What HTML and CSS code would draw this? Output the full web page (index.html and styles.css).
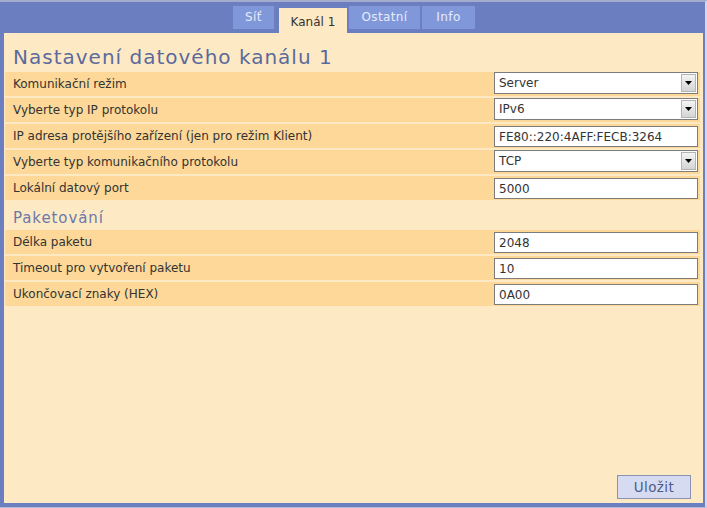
FILE: index.html
```html
<!DOCTYPE html>
<html lang="cs">
<head>
<meta charset="utf-8">
<title>Nastavení datového kanálu 1</title>
<link rel="stylesheet" href="styles.css">
</head>
<body>
<div class="frame">
  <nav class="tabs">
    <a class="tab tab-sit">Síť</a>
    <a class="tab tab-active">Kanál 1</a>
    <a class="tab tab-ostatni">Ostatní</a>
    <a class="tab tab-info">Info</a>
  </nav>
  <main class="panel">
    <h1 class="title">Nastavení datového kanálu 1</h1>
    <div class="rows">
      <div class="row">
        <span class="label">Komunikační režim</span>
        <div class="select"><span class="val">Server</span><span class="btn"><svg width="7" height="4" viewBox="0 0 7 4"><path d="M0 0H7L3.5 4Z" fill="#000"/></svg></span></div>
      </div>
      <div class="row">
        <span class="label">Vyberte typ IP protokolu</span>
        <div class="select"><span class="val">IPv6</span><span class="btn"><svg width="7" height="4" viewBox="0 0 7 4"><path d="M0 0H7L3.5 4Z" fill="#000"/></svg></span></div>
      </div>
      <div class="row">
        <span class="label">IP adresa protějšího zařízení (jen pro režim Klient)</span>
        <input class="text" type="text" value="FE80::220:4AFF:FECB:3264">
      </div>
      <div class="row">
        <span class="label">Vyberte typ komunikačního protokolu</span>
        <div class="select"><span class="val">TCP</span><span class="btn"><svg width="7" height="4" viewBox="0 0 7 4"><path d="M0 0H7L3.5 4Z" fill="#000"/></svg></span></div>
      </div>
      <div class="row">
        <span class="label">Lokální datový port</span>
        <input class="text" type="text" value="5000">
      </div>
    </div>
    <h2 class="section">Paketování</h2>
    <div class="rows">
      <div class="row">
        <span class="label">Délka paketu</span>
        <input class="text" type="text" value="2048">
      </div>
      <div class="row">
        <span class="label">Timeout pro vytvoření paketu</span>
        <input class="text" type="text" value="10">
      </div>
      <div class="row">
        <span class="label">Ukončovací znaky (HEX)</span>
        <input class="text" type="text" value="0A00">
      </div>
    </div>
    <div class="actions">
      <button class="save" type="button">Uložit</button>
    </div>
  </main>
</div>
</body>
</html>
```
FILE: styles.css
```css
* { box-sizing: border-box; }
html, body { margin: 0; padding: 0; }
body {
  width: 707px;
  height: 508px;
  overflow: hidden;
  background: #6b7fc0;
  font-family: "DejaVu Sans", sans-serif;
}
.frame {
  width: 707px;
  height: 508px;
  display: flex;
  flex-direction: column;
  background: #6b7fc0;
  border-top: 2px solid #a4acce;
  border-right: 2px solid #d4d8ea;
  border-bottom: 1px solid #b4bcd8;
  padding: 0 2px 4px 4px;
}
.tabs {
  height: 31px;
  display: flex;
  align-items: flex-start;
  padding-left: 229px;
}
.tab {
  display: block;
  height: 23px;
  margin-top: 4px;
  background: #8098da;
  color: #e6ebfb;
  font-size: 12px;
  line-height: 22px;
  text-align: center;
  letter-spacing: 0.4px;
}
.tab-sit { width: 41px; }
.tab-active {
  width: 68px;
  height: 25px;
  margin-top: 6px;
  margin-left: 5px;
  background: #fee9c5;
  color: #333;
  line-height: 28px;
  letter-spacing: 0;
}
.tab-ostatni { width: 71px; margin-left: 2px; }
.tab-info { width: 53px; margin-left: 2px; }
.panel {
  flex: 1;
  display: flex;
  flex-direction: column;
  background: #fee9c5;
  padding: 12px 3px 4px 1px;
}
.title {
  margin: 0 0 3px 8px;
  font-weight: normal;
  font-size: 20px;
  line-height: 24px;
  letter-spacing: 1px;
  color: #5b6a9c;
}
.rows {
  display: flex;
  flex-direction: column;
  gap: 2px;
}
.row {
  height: 24px;
  display: flex;
  align-items: flex-start;
  justify-content: space-between;
  background: #fdd898;
  padding: 0 2px 0 8px;
}
.label {
  font-size: 12px;
  line-height: 24px;
  color: #333;
}
.select {
  width: 204px;
  height: 22px;
  display: flex;
  align-items: center;
  justify-content: space-between;
  background: #fff;
  border: 1px solid #7c7c7c;
  padding: 0 1px 0 4px;
  font-size: 12px;
  color: #333;
}
.btn {
  width: 15px;
  height: 18px;
  display: flex;
  align-items: center;
  justify-content: center;
  background: linear-gradient(#f4f4f4, #d4d4d4);
  border: 1px solid #b4b4b4;
}
.text {
  width: 204px;
  height: 21px;
  margin-top: 2px;
  border: 1px solid #7c7c7c;
  background: #fff;
  padding: 0 4px;
  font-family: inherit;
  font-size: 12px;
  color: #333;
  outline: none;
}
.section {
  margin: 0;
  height: 30px;
  padding: 8px 0 0 8px;
  font-weight: normal;
  font-size: 15px;
  line-height: 20px;
  letter-spacing: 0.9px;
  color: #6b79a8;
}
.actions {
  margin-top: auto;
  display: flex;
  justify-content: flex-end;
  padding-right: 9px;
}
.save {
  width: 74px;
  height: 24px;
  background: #d6dbf1;
  border: 1px solid #8b92b2;
  font-family: inherit;
  font-size: 13.5px;
  color: #4d5b8c;
  padding: 0;
  letter-spacing: 0.4px;
}
```
